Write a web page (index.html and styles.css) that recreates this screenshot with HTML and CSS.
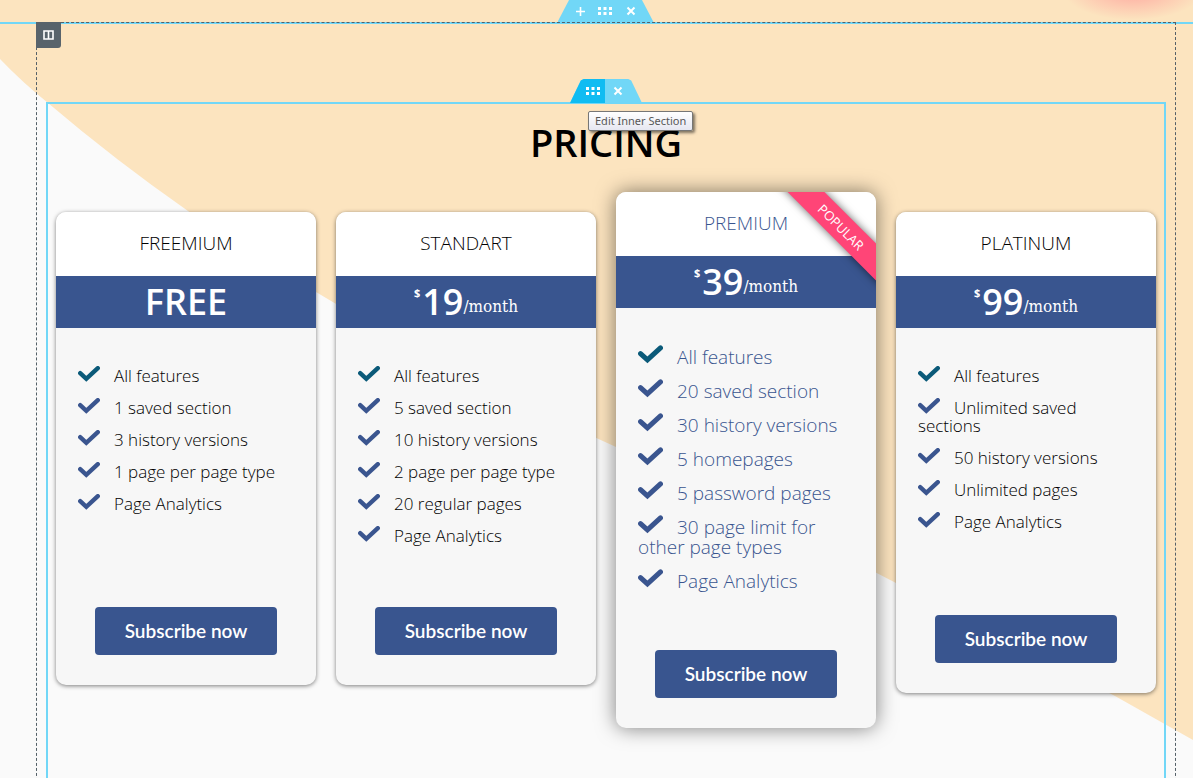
FILE: index.html
```html
<!DOCTYPE html>
<html lang="en">
<head>
    <meta charset="UTF-8">
    <meta name="viewport" content="width=device-width, initial-scale=1.0">
    <title>Pricing</title>
    <link rel="stylesheet" href="styles.css">
</head>
<body>
    <!-- icons used more than once -->
    <svg class="sprite" aria-hidden="true">
        <symbol id="check" viewBox="0 0 22 16">
            <path d="M2.2 7.2 L8.3 12.800 L19.800 2.2" fill="none" stroke="currentColor" stroke-width="4.400" stroke-linecap="round" stroke-linejoin="miter"/>
        </symbol>
        <symbol id="grip" viewBox="0 0 14 8">
            <path d="M0 0h3v3H0zM5.500 0h3v3h-3zM11 0h3v3h-3zM0 5h3v3H0zM5.500 5h3v3h-3zM11 5h3v3h-3z" fill="currentColor"/>
        </symbol>
        <symbol id="close" viewBox="0 0 10 10">
            <path d="M1.500 1.500 L8.500 8.500 M8.500 1.500 L1.500 8.500" stroke="currentColor" stroke-width="2"/>
        </symbol>
    </svg>

    <div class="page">
        <svg class="backdrop" viewBox="0 0 1193 778" preserveAspectRatio="none" aria-hidden="true">
            <path d="M0 0H1193V740L1115 696L896 583Q756 509 616 447Q440 367 316 292Q250 254 188 211Q115 160 48 103Q22 82 0 59Z" fill="#fce4bf"/>
        </svg>
        <div class="glow"></div>

        <section class="section">
            <div class="tab section-tab">
                <button aria-label="Add section"><svg width="9" height="9" viewBox="0 0 9 9"><path d="M4.500 0v9M0 4.500h9" stroke="currentColor" stroke-width="1.600"/></svg></button>
                <button aria-label="Edit section"><svg width="14" height="8"><use href="#grip"/></svg></button>
                <button aria-label="Delete section"><svg width="10" height="10"><use href="#close"/></svg></button>
            </div>

            <div class="column">
                <button class="column-handle" aria-label="Edit column">
                    <svg width="11" height="10" viewBox="0 0 11 10"><path d="M1 1h9v8H1zM5.500 1v8" fill="none" stroke="currentColor" stroke-width="1.600"/></svg>
                </button>

                <div class="inner-section">
                    <div class="tab inner-tab">
                        <button class="active" aria-label="Edit Inner Section"><svg width="14" height="8"><use href="#grip"/></svg></button>
                        <button aria-label="Delete Inner Section"><svg width="10" height="10"><use href="#close"/></svg></button>
                    </div>
                    <div class="tooltip">Edit Inner Section</div>

                    <h2 class="title">PRICING</h2>

                    <div class="plans">
                        <article class="plan">
                            <h3 class="plan-name">FREEMIUM</h3>
                            <div class="price"><span class="amount">FREE</span></div>
                            <ul class="features">
                                <li><svg class="check"><use href="#check"/></svg>All features</li>
                                <li><svg class="check"><use href="#check"/></svg>1 saved section</li>
                                <li><svg class="check"><use href="#check"/></svg>3 history versions</li>
                                <li><svg class="check"><use href="#check"/></svg>1 page per page type</li>
                                <li><svg class="check"><use href="#check"/></svg>Page Analytics</li>
                            </ul>
                            <button class="subscribe">Subscribe now</button>
                        </article>

                        <article class="plan">
                            <h3 class="plan-name">STANDART</h3>
                            <div class="price"><span class="currency">$</span><span class="amount">19</span><span class="period">/month</span></div>
                            <ul class="features">
                                <li><svg class="check"><use href="#check"/></svg>All features</li>
                                <li><svg class="check"><use href="#check"/></svg>5 saved section</li>
                                <li><svg class="check"><use href="#check"/></svg>10 history versions</li>
                                <li><svg class="check"><use href="#check"/></svg>2 page per page type</li>
                                <li><svg class="check"><use href="#check"/></svg>20 regular pages</li>
                                <li><svg class="check"><use href="#check"/></svg>Page Analytics</li>
                            </ul>
                            <button class="subscribe">Subscribe now</button>
                        </article>

                        <article class="plan popular">
                            <div class="ribbon-clip"><div class="ribbon">POPULAR</div></div>
                            <h3 class="plan-name">PREMIUM</h3>
                            <div class="price"><span class="currency">$</span><span class="amount">39</span><span class="period">/month</span></div>
                            <ul class="features">
                                <li><svg class="check"><use href="#check"/></svg>All features</li>
                                <li><svg class="check"><use href="#check"/></svg>20 saved section</li>
                                <li><svg class="check"><use href="#check"/></svg>30 history versions</li>
                                <li><svg class="check"><use href="#check"/></svg>5 homepages</li>
                                <li><svg class="check"><use href="#check"/></svg>5 password pages</li>
                                <li><svg class="check"><use href="#check"/></svg>30 page limit for other page types</li>
                                <li><svg class="check"><use href="#check"/></svg>Page Analytics</li>
                            </ul>
                            <button class="subscribe">Subscribe now</button>
                        </article>

                        <article class="plan platinum">
                            <h3 class="plan-name">PLATINUM</h3>
                            <div class="price"><span class="currency">$</span><span class="amount">99</span><span class="period">/month</span></div>
                            <ul class="features">
                                <li><svg class="check"><use href="#check"/></svg>All features</li>
                                <li><svg class="check"><use href="#check"/></svg>Unlimited saved sections</li>
                                <li><svg class="check"><use href="#check"/></svg>50 history versions</li>
                                <li><svg class="check"><use href="#check"/></svg>Unlimited pages</li>
                                <li><svg class="check"><use href="#check"/></svg>Page Analytics</li>
                            </ul>
                            <button class="subscribe">Subscribe now</button>
                        </article>
                    </div>
                </div>
            </div>
        </section>
    </div>
</body>
</html>
```
FILE: styles.css
```css
* {
    box-sizing: border-box;
}

body {
    margin: 0;
    font-family: "Open Sans", sans-serif;
    color: #000;
    background-color: #fafafa;
}

button {
    font-family: inherit;
    border: none;
    padding: 0;
    cursor: pointer;
}

.sprite {
    position: absolute;
    width: 0;
    height: 0;
}

.page {
    position: relative;
    height: 100vh;
    overflow: hidden;
    padding-top: 22px;
}

.backdrop {
    position: absolute;
    top: 0;
    left: 0;
    width: 100%;
    height: 100%;
}

.glow {
    position: absolute;
    top: -40px;
    right: -10px;
    width: 140px;
    height: 60px;
    background: radial-gradient(closest-side, #ff9a98, rgba(255, 190, 170, 0));
    opacity: 0.8;
}

/* editor chrome */
.section {
    position: relative;
    border-top: 2px solid #71d7f7;
    padding: 0 17px 0 36px;
}

.column {
    position: relative;
    margin-top: -2px;
    padding: 79px 9px 0;
    border: 1px dashed #556068;
}

.column-handle {
    position: absolute;
    top: -1px;
    left: -1px;
    display: flex;
    align-items: center;
    justify-content: center;
    width: 25px;
    height: 26px;
    color: #fff;
    background-color: #58636b;
    border-radius: 0 0 3px 0;
}

.tab {
    position: absolute;
    left: 50%;
    transform: translateX(-50%);
    display: flex;
    background-color: #71d7f7;
}

.tab button {
    display: flex;
    align-items: center;
    justify-content: center;
    color: #fff;
    background: none;
}

.section-tab {
    top: -24px;
    left: calc(50% + 9px);
    width: 96px;
    height: 22px;
    padding: 0 10px;
    clip-path: polygon(12% 0, 88% 0, 100% 100%, 0 100%);
}

.section-tab button {
    flex: 1;
}

.inner-tab {
    top: -25px;
    width: 72px;
    height: 24px;
    clip-path: polygon(19% 0, 81% 0, 85% 6%, 100% 100%, 0 100%, 15% 6%);
}

.inner-tab button {
    flex: 1;
    padding-right: 12px;
}

.inner-tab .active {
    padding: 0 0 0 10px;
    background-color: #10bcf2;
}

.inner-section {
    position: relative;
    border: 2px solid #71d7f7;
    padding: 0 8px 80px;
}

.tooltip {
    position: absolute;
    top: 7px;
    left: calc(50% - 18px);
    padding: 0 6px;
    font-family: "Noto Sans", sans-serif;
    font-size: 11px;
    line-height: 18px;
    white-space: nowrap;
    color: #575757;
    background: linear-gradient(#fff, #e6e7f1);
    border: 1px solid #767676;
    border-radius: 2px;
    box-shadow: 2px 2px 3px rgba(0, 0, 0, 0.5);
}

/* pricing */
.title {
    margin: 0;
    padding: 13px 0 45px;
    font-size: 38px;
    line-height: 50px;
    font-weight: 600;
    text-align: center;
}

.plans {
    display: grid;
    grid-template-columns: repeat(4, 1fr);
    align-items: start;
    gap: 20px;
}

.plan {
    display: flex;
    flex-direction: column;
    background-color: #f7f7f7;
    border-radius: 10px;
    box-shadow: 0 1px 4px rgba(0, 0, 0, 0.5);
}

.plan-name {
    margin: 0;
    padding-bottom: 2px;
    font-size: 19px;
    line-height: 62px;
    font-weight: 300;
    text-align: center;
    background-color: #fff;
    border-radius: 10px 10px 0 0;
}

.price {
    display: flex;
    justify-content: center;
    height: 52px;
    line-height: 52px;
    color: #fff;
    background-color: #39558f;
}

.amount {
    font-size: 36px;
    font-weight: 600;
}

.currency {
    margin-right: 2px;
    font-size: 11px;
    line-height: 34px;
    font-weight: 700;
}

.period {
    font-family: "DejaVu Serif Condensed", "DejaVu Serif", serif;
    font-size: 17px;
    line-height: 60px;
}

.features {
    margin: 0;
    padding: 32px 22px 0;
    min-height: 224px;
    list-style: none;
    font-size: 17px;
    line-height: 18px;
    font-weight: 300;
}

.features li {
    padding: 7px 0;
}

.check {
    width: 22px;
    height: 16px;
    margin: -4px 14px 0 0;
    color: #3a558f;
}

.features li:first-child .check {
    color: #0b5a79;
}

.subscribe {
    align-self: center;
    width: 182px;
    height: 48px;
    margin: 55px 0 30px;
    padding-bottom: 2px;
    font-family: Lato, sans-serif;
    font-size: 19px;
    font-weight: 600;
    color: #fff;
    background-color: #39558f;
    border-radius: 4px;
}

.popular {
    position: relative;
    margin-top: -20px;
    color: #39558f;
    box-shadow: 0 0 20px rgba(0, 0, 0, 0.5);
}

.popular .features {
    font-size: 19px;
    line-height: 20px;
}

.popular .check {
    width: 25px;
    height: 19px;
}

.popular .subscribe {
    margin-top: 52px;
}

.platinum .features {
    min-height: 232px;
}

.ribbon-clip {
    position: absolute;
    top: 0;
    right: 0;
    width: 110px;
    height: 110px;
    overflow: hidden;
    border-radius: 0 10px 0 0;
}

.ribbon {
    position: absolute;
    top: 22px;
    right: -40px;
    width: 150px;
    transform: rotate(45deg);
    font-size: 13px;
    line-height: 26px;
    text-align: center;
    color: #fff;
    background-color: #ff4577;
    box-shadow: 0 0 8px rgba(0, 0, 0, 0.6);
}
```
